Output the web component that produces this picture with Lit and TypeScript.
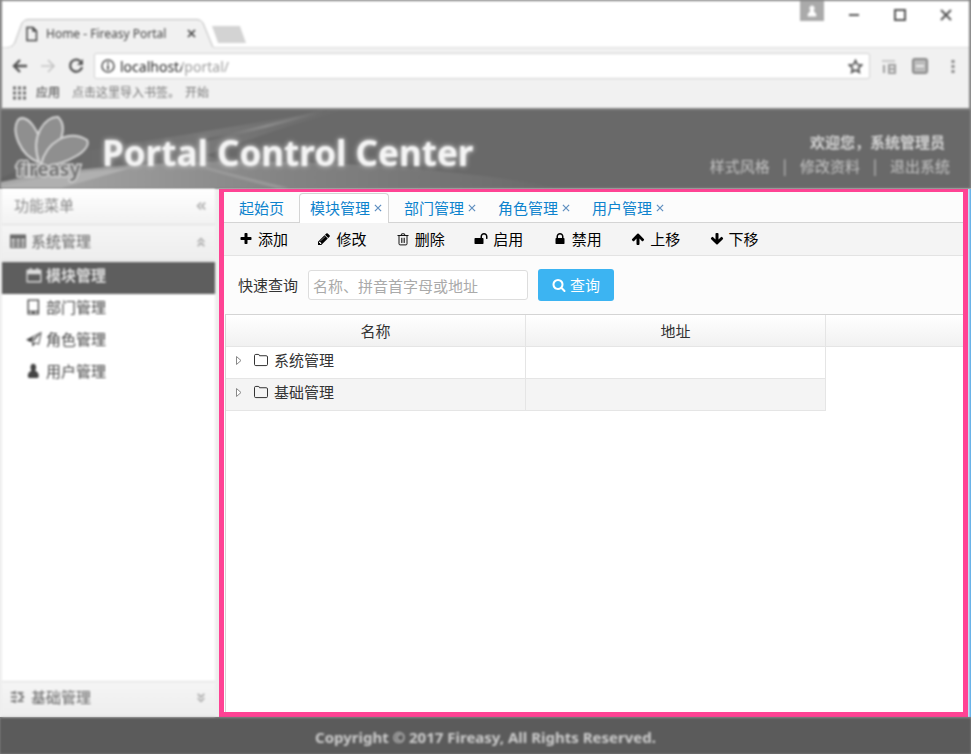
import { LitElement, html, css, svg, nothing } from "lit";
import { customElement, state } from "lit/decorators.js";
import { classMap } from "lit/directives/class-map.js";

const solid = (d: string) => svg`<path d=${d} fill="currentColor"/>`;

const glyphs: Record<string, unknown> = {
  plus: solid("M1600 736v192q0 40-28 68t-68 28h-416v416q0 40-28 68t-68 28h-192q-40 0-68-28t-28-68v-416h-416q-40 0-68-28t-28-68v-192q0-40 28-68t68-28h416v-416q0-40 28-68t68-28h192q40 0 68 28t28 68v416h416q40 0 68 28t28 68z"),
  pencil: solid("M491 1536l91-91-235-235-91 91v107h128v128h107zm523-928q0-22-22-22-10 0-17 7l-542 542q-7 7-7 17 0 22 22 22 10 0 17-7l542-542q7-7 7-17zm-54-192l416 416-832 832h-416v-416zm683 96q0 53-37 90l-166 166-416-416 166-165q36-38 90-38 53 0 91 38l235 234q37 39 37 91z"),
  trash: svg`<g fill="none" stroke="currentColor" stroke-width="118"><path d="M190 450H1602M640 440L720 230H1072L1152 440M384 460V1500Q384 1650 520 1650H1272Q1408 1650 1408 1500V460"/><path d="M704 740V1400M896 740V1400M1088 740V1400" stroke-width="90"/></g>`,
  unlock: solid("M1728 576v256q0 26-19 45t-45 19h-64q-26 0-45-19t-19-45v-256q0-106-75-181t-181-75-181 75-75 181v192h96q40 0 68 28t28 68v576q0 40-28 68t-68 28h-960q-40 0-68-28t-28-68v-576q0-40 28-68t68-28h672v-192q0-185 131.5-316.5t316.5-131.5 316.5 131.5 131.5 316.5z"),
  lock: solid("M640 768h512v-192q0-106-75-181t-181-75-181 75-75 181v192zm832 96v576q0 40-28 68t-68 28h-960q-40 0-68-28t-28-68v-576q0-40 28-68t68-28h32v-192q0-184 132-316t316-132 316 132 132 316v192h32q40 0 68 28t28 68z"),
  up: solid("M1675 971q0 51-37 90l-75 75q-38 38-91 38-54 0-90-38l-294-293v704q0 52-37.5 84.5t-90.5 32.5h-128q-53 0-90.5-32.5t-37.5-84.5v-704l-294 293q-36 38-90 38t-90-38l-75-75q-38-38-38-90 0-53 38-91l651-651q35-37 90-37 54 0 91 37l651 651q37 39 37 91z"),
  down: svg`<g transform="rotate(180 896 896)">${solid("M1675 971q0 51-37 90l-75 75q-38 38-91 38-54 0-90-38l-294-293v704q0 52-37.5 84.5t-90.5 32.5h-128q-53 0-90.5-32.5t-37.5-84.5v-704l-294 293q-36 38-90 38t-90-38l-75-75q-38-38-38-90 0-53 38-91l651-651q35-37 90-37 54 0 91 37l651 651q37 39 37 91z")}</g>`,
  search: solid("M1216 832q0-185-131.5-316.5t-316.5-131.5-316.5 131.5-131.5 316.5 131.5 316.5 316.5 131.5 316.5-131.5 131.5-316.5zm512 832q0 52-38 90t-90 38q-54 0-90-38l-343-342q-179 124-399 124-143 0-273.5-55.5t-225-150-150-225-55.5-273.5 55.5-273.5 150-225 225-150 273.5-55.5 273.5 55.5 225 150 150 225 55.5 273.5q0 220-124 399l343 343q37 37 37 90z"),
  folder: svg`<path d="M64 350Q64 180 230 180H540Q700 180 700 350H1560Q1728 350 1728 510V1450Q1728 1610 1560 1610H230Q64 1610 64 1450Z" fill="none" stroke="currentColor" stroke-width="128"/>`,
  close: svg`<path d="M200 200L1592 1592M1592 200L200 1592" fill="none" stroke="currentColor" stroke-width="270"/>`,
  table: svg`<path d="M64 256H1728V1600H64ZM64 600H1728M64 930H1728M64 1260H1728M640 500V1600M1180 500V1600" fill="none" stroke="currentColor" stroke-width="150"/><path d="M64 256H1728V540H64Z" fill="currentColor"/>`,
  calendar: svg`<path d="M128 380H1664V1650H128Z" fill="none" stroke="currentColor" stroke-width="150"/><path d="M128 320H1664V800H128ZM420 100H620V400H420ZM1170 100H1370V400H1170Z" fill="currentColor"/>`,
  tablet: svg`<path d="M240 120H1392V1670H240ZM240 1380H1392M700 1530H930" fill="none" stroke="currentColor" stroke-width="150"/>`,
  plane: svg`<path d="M1700 160L1420 1480L1010 1310L760 1640V1200L1500 360L560 1200L140 980Z" fill="none" stroke="currentColor" stroke-width="110"/><path d="M760 1740V1270L1000 1390ZM560 1200L0 980L900 560Z" fill="currentColor"/>`,
  user: solid("M816 80C1000 80 1130 240 1130 440C1130 640 1080 800 1010 880C1280 960 1430 1200 1430 1450Q1430 1670 1260 1670H372Q202 1670 202 1450C202 1200 352 960 622 880C552 800 502 640 502 440C502 240 632 80 816 80Z"),
  sliders: svg`<path d="M100 420H500M820 420H1500M100 900H800M100 1380H500M820 1380H1500M560 220V620M560 1180V1580M1100 560L1500 900L1100 1200" fill="none" stroke="currentColor" stroke-width="170"/>`,
};

const icon = (name: string) =>
  html`<svg class="icon" viewBox="0 0 1792 1792" aria-hidden="true">${glyphs[name]}</svg>`;

@customElement("browser-chrome")
class BrowserChrome extends LitElement {
  static styles = css`
    :host { display: block; background: #f1f1f1; font-family: "Noto Sans", "Noto Sans CJK SC", sans-serif; color: #555; }
    button { border: 0; background: none; padding: 0; color: inherit; font: inherit; display: flex; align-items: center; justify-content: center; }
    svg { display: block; fill: none; stroke: currentColor; }
    .strip { display: flex; height: 47px; background: #fff; border-bottom: 1px solid #dcdcdc; box-sizing: border-box; }
    .tab { position: relative; display: flex; align-items: center; gap: 8px; width: 208px; height: 29px; margin: 18px 0 0 6px; padding-left: 17px; box-sizing: border-box; color: #444; }
    .shape { position: absolute; inset: 0; }
    .tab > :not(.shape) { position: relative; }
    .name { flex: 1; white-space: nowrap; font-size: 12px; }
    .tab button { margin-right: 20px; }
    .new { width: 34px; height: 17px; margin: 25px 0 0 -4px; background: #d3d3d3; clip-path: polygon(0 0, 82% 0, 100% 100%, 18% 100%); }
    .window { display: flex; margin-left: auto; align-items: flex-start; }
    .window button { width: 46px; height: 28px; }
    .window .profile { width: 24px; height: 20px; margin-right: 7px; background: #aaa; color: #fff; }
    .bar { display: flex; align-items: center; height: 36px; padding: 0 9px 0 10px; }
    .nav { display: flex; gap: 12px; }
    .nav button { width: 16px; height: 20px; }
    .faint { color: #c4c4c4; }
    .address { display: flex; align-items: center; gap: 5px; flex: 1; height: 26px; margin: 0 11px 0 10px; padding: 0 6px; box-sizing: border-box; background: #fff; border: 1px solid #d2d2d2; border-radius: 2px; }
    .address input { flex: 1; min-width: 0; border: 0; padding: 0; height: 22px; outline: 0; font: 14px "Noto Sans", sans-serif; color: transparent; background: linear-gradient(to right, #222 62px, #999 62px); background-clip: text; -webkit-background-clip: text; }
    .extras { display: flex; align-items: center; gap: 16px; color: #888; }
    .marks { display: flex; align-items: center; height: 18px; padding: 0 11px; gap: 12px; font-size: 12px; line-height: 18px; color: #777; }
    .marks a { color: inherit; text-decoration: none; }
    .marks .apps { display: flex; align-items: center; gap: 10px; color: #333; }
    .marks a:last-child { margin-left: -7px; }
  `;
  render() {
    return html`
      <div class="strip">
        <div class="tab">
          <svg class="shape" width="208" height="29"><path d="M0 28.500Q5 28 7 23L14 4Q16 .5 20 .5H189Q193 .5 195 4L205 28.500" fill="#f1f1f1" stroke="#bbb"/><path d="M1 29H205" stroke="#f1f1f1" stroke-width="2"/></svg>
          <svg width="13" height="16"><path d="M2 1.500H8L11.500 5V14.500H2ZM8 1.500V5H11.500" stroke-width="1.500"/></svg>
          <span class="name">Home - Fireasy Portal</span>
          <button aria-label="Close tab"><svg width="9" height="9"><path d="M1 1L8 8M8 1L1 8" stroke-width="1.700"/></svg></button>
        </div>
        <div class="new"></div>
        <div class="window">
          <button class="profile" aria-label="Profile"><svg width="10" height="12"><path d="M1 11C1 8 3 7 4 6C2 3 3 1 5 1S8 3 6 6C7 7 9 8 9 11Z" fill="currentColor"/></svg></button>
          <button aria-label="Minimize"><svg width="12" height="12"><path d="M1 6H11" stroke-width="2"/></svg></button>
          <button aria-label="Maximize"><svg width="12" height="12"><path d="M1 1H11V11H1Z" stroke-width="2"/></svg></button>
          <button aria-label="Close"><svg width="12" height="12"><path d="M1 1L11 11M11 1L1 11" stroke-width="2"/></svg></button>
        </div>
      </div>
      <div class="bar">
        <div class="nav">
          <button aria-label="Back"><svg width="16" height="16"><path d="M15 8H2M8 2L2 8L8 14" stroke-width="2.400"/></svg></button>
          <button class="faint" aria-label="Forward"><svg width="16" height="16"><path d="M1 8H14M8 2L14 8L8 14" stroke-width="1.600"/></svg></button>
          <button aria-label="Reload"><svg width="16" height="16"><path d="M12.500 3.500A6 6 0 1 0 14 9" stroke-width="2.400"/><path d="M15 1V7H9Z" fill="currentColor" stroke="none"/></svg></button>
        </div>
        <div class="address">
          <svg width="14" height="14"><circle cx="7" cy="7" r="6" stroke-width="1.600"/><path d="M7 6V11M7 3V5" stroke-width="1.800"/></svg>
          <input aria-label="Address" value="localhost/portal/" />
          <svg width="15" height="15"><path d="M7.500 1.500L9.300 5.500L13.700 6L10.400 9L11.300 13.300L7.500 11L3.700 13.300L4.600 9L1.300 6L5.700 5.500Z" stroke-width="1.700"/></svg>
        </div>
        <div class="extras">
          <svg width="15" height="15"><path d="M1 2H14" stroke-width="1.500" opacity=".5"/><path d="M3 6V14M8 6H14V14H8ZM8 10H14" stroke-width="2" opacity=".8"/></svg>
          <svg width="16" height="16"><rect x="1" y="1" width="14" height="14" rx="2" fill="#bbb" stroke-width="2"/><path d="M4 8H12" stroke="#eee" stroke-width="2"/></svg>
          <svg width="16" height="16"><path d="M9 2V5M9 7V10M9 12V15" stroke-width="3"/></svg>
        </div>
      </div>
      <div class="marks">
        <a class="apps" href="#"><svg width="13" height="14"><path d="M0 2H13M0 7H13M0 12H13" stroke-width="3" stroke-dasharray="3 2" opacity=".7"/></svg>应用</a>
        <a href="#">点击这里导入书签。</a><a href="#">开始</a>
      </div>`;
  }
}

@customElement("portal-header")
class PortalHeader extends LitElement {
  static styles = css`
    :host { position: relative; display: flex; align-items: center; background: #696969; color: #d4d4d4; font-family: "Noto Sans CJK SC", sans-serif; overflow: hidden; }
    .swoosh { position: absolute; inset: 0; width: 760px; height: 100%; }
    .brand { position: relative; display: flex; align-items: center; gap: 10px; padding-left: 11px; }
    h1 { margin: 0; padding-top: 8px; font: bold 35px/48px "Noto Sans", sans-serif; color: #f4f4f4; text-shadow: 0 0 5px #ddd; white-space: nowrap; }
    .logo { display: block; width: 80px; height: 76px; }
    .account { position: relative; margin-left: auto; padding: 9px 20px 0 0; font-size: 15px; line-height: 24px; text-align: right; }
    .hello { padding-right: 5px; font-weight: bold; }
    .links { display: flex; gap: 13px; color: #c4c4c4; }
    a { color: inherit; text-decoration: none; }
  `;
  render() {
    return html`
      <svg class="swoosh" viewBox="0 0 760 78" preserveAspectRatio="none">
        <defs>
          <linearGradient id="a"><stop offset="0" stop-color="#aaa"/><stop offset=".5" stop-color="#848484"/><stop offset="1" stop-color="#696969"/></linearGradient>
          <linearGradient id="b"><stop offset="0" stop-color="#626262"/><stop offset=".6" stop-color="#787878"/><stop offset="1" stop-color="#696969"/></linearGradient>
          <linearGradient id="c"><stop offset="0" stop-color="#696969"/><stop offset=".5" stop-color="#8a8a8a"/><stop offset="1" stop-color="#696969"/></linearGradient>
        </defs>
        <path d="M0 68C60 40 130 34 200 22L330 0H345C280 16 240 34 205 45L300 78H0Z" fill="url(#b)"/>
        <path d="M205 30Q270 16 325 0" fill="none" stroke="url(#c)" stroke-width="3"/>
        <path d="M0 72C150 40 400 48 560 78H0Z" fill="url(#a)"/>
        <path d="M0 76Q60 62 130 58L60 78H0Z" fill="#b0b0b0"/>
        <path d="M205 58Q240 68 290 80" fill="none" stroke="#999" stroke-width="3"/>
      </svg>
      <div class="brand">
        <svg class="logo" viewBox="0 0 80 76" role="img" aria-label="fireasy">
          <g fill="#8f8f8f" stroke="#d6d6d6" stroke-width="2">
            <path d="M26 51C8 44 -1 20 6 9C14 1 30 20 30 44Z"/>
            <path d="M27 51C18 25 33 5 46 6C58 17 45 43 30 54Z"/>
            <path d="M29 54C34 31 56 18 75 29C80 38 58 53 29 56Z"/>
          </g>
          <text x="4" y="65" font-family="Noto Sans" font-weight="bold" font-size="19" fill="#777" stroke="#d0d0d0" stroke-width="3" paint-order="stroke">fireasy</text>
        </svg>
        <h1>Portal Control Center</h1>
      </div>
      <div class="account">
        <div class="hello">欢迎您，系统管理员</div>
        <nav class="links"><a href="#">样式风格</a><span>|</span><a href="#">修改资料</a><span>|</span><a href="#">退出系统</a></nav>
      </div>`;
  }
}

@customElement("side-menu")
class SideMenu extends LitElement {
  static styles = css`
    :host { display: flex; flex-direction: column; background: #fff; color: #666; font: 15px/24px "Noto Sans CJK SC", sans-serif; }
    button { display: flex; align-items: center; gap: 5px; width: 100%; height: 36px; padding: 0 9px 4px 8px; border: 0; border-bottom: 1px solid #ddd; background: linear-gradient(#f5f5f5, #eee); color: inherit; font: inherit; box-sizing: border-box; }
    .title { padding-left: 12px; background: linear-gradient(#fff, #f2f2f2); color: #888; }
    .chev { width: 10px; height: 10px; margin: 2px 0 0 auto; fill: none; stroke: #aaa; stroke-width: 2; }
    .icon { width: 16px; height: 16px; }
    ul { flex: 1; list-style: none; margin: 0; padding: 1px 0 0; }
    a { display: flex; align-items: center; gap: 4px; height: 32px; padding: 0 24px 6px; box-sizing: border-box; color: #444; text-decoration: none; }
    .on { background: #5e5e5e; color: #ddd; font-weight: bold; }
    .last { border-top: 1px solid #ddd; }
  `;
  private items = [["calendar", "模块管理"], ["tablet", "部门管理"], ["plane", "角色管理"], ["user", "用户管理"]];
  render() {
    return html`
      <button class="title">功能菜单<svg class="chev" viewBox="0 0 12 12"><path d="M6 2L2 6L6 10M11 2L7 6L11 10"/></svg></button>
      <button>${icon("table")}系统管理<svg class="chev" viewBox="0 0 12 12"><path d="M2 6L6 2L10 6M2 11L6 7L10 11"/></svg></button>
      <ul>
        ${this.items.map(([name, label], i) => html`<li><a href="#" class=${classMap({ on: i === 0 })}>${icon(name)}${label}</a></li>`)}
      </ul>
      <button class="last">${icon("sliders")}基础管理<svg class="chev" viewBox="0 0 12 12"><path d="M2 1L6 5L10 1M2 6L6 10L10 6"/></svg></button>`;
  }
}

@customElement("module-panel")
class ModulePanel extends LitElement {
  @state() private active = 1;
  static styles = css`
    :host { display: flex; flex-direction: column; background: #fff; color: #333; font: 15px/22px "Noto Sans CJK SC", sans-serif; }
    button { font: inherit; border: 0; background: none; padding: 0; color: inherit; }
    .icon { display: block; width: 14px; height: 14px; flex: none; }
    .tabs { display: flex; gap: 4px; height: 29px; padding: 1px 4px 0; background: #fcfcfc; border-bottom: 1px solid #d4d4d4; }
    .tab { display: flex; align-items: center; gap: 4px; height: 29px; padding: 0 10px; border: 1px solid transparent; border-bottom: 0; border-radius: 4px 4px 0 0; box-sizing: border-box; color: #0e83cd; }
    .tab.closable { padding-right: 6px; }
    .tab.active { height: 30px; background: #fff; border-color: #d4d4d4; padding-bottom: 1px; }
    .tab .close .icon { width: 8px; height: 8px; }
    .close { color: #5f8fc0; }
    .tools { background: #f4f4f4; border-bottom: 1px solid #e3e3e3; padding-left: 13px; }
    .row { display: grid; grid-template-columns: repeat(7, 1fr); width: 549px; height: 32px; }
    .row button { display: flex; align-items: center; gap: 5px; padding-left: 2px; color: #000; white-space: nowrap; }
    form { display: flex; align-items: center; gap: 10px; height: 58px; padding: 0 14px; background: #fcfcfc; box-sizing: border-box; }
    input { width: 220px; height: 30px; padding: 0 4px; border: 1px solid #ddd; border-radius: 3px; box-sizing: border-box; background: #fff; font: inherit; color: #333; outline: 0; }
    input::placeholder { color: #aaa; }
    .query { display: flex; align-items: center; justify-content: center; gap: 4px; width: 76px; height: 32px; border-radius: 3px; background: #3cb4f2; color: #fff; }
    .grid { flex: 1; margin-left: 1px; border: 0 solid #d4d4d4; border-width: 1px 0 0 1px; }
    table { width: 100%; table-layout: fixed; border-collapse: separate; border-spacing: 0; }
    .col { width: 300px; }
    th, td { height: 32px; padding: 0; box-sizing: border-box; border: 0 solid #e5e5e5; border-width: 0 1px 1px 0; }
    th { background: linear-gradient(#fff, #f1f1f1); font-weight: normal; }
    th:last-child { border-right: 0; }
    td:last-child { border: 0; }
    .alt td:not(:last-child) { background: #f4f4f4; }
    .cell { display: flex; align-items: center; padding: 0 0 6px 10px; }
    .cell .folder { display: flex; margin: 0 6px 0 11px; }
    .twist { width: 7px; height: 9px; margin-top: 2px; display: block; }
  `;
  private tabs = ["起始页", "模块管理", "部门管理", "角色管理", "用户管理"];
  private tools = [["plus", "添加"], ["pencil", "修改"], ["trash", "删除"], ["unlock", "启用"], ["lock", "禁用"], ["up", "上移"], ["down", "下移"]];
  render() {
    return html`
      <div class="tabs" role="tablist">
        ${this.tabs.map((t, i) => html`
          <div class=${classMap({ tab: true, closable: i > 0, active: i === this.active })}>
            <button role="tab" @click=${() => (this.active = i)}>${t}</button>
            ${i > 0 ? html`<button class="close" aria-label="关闭">${icon("close")}</button>` : nothing}
          </div>`)}
      </div>
      <div class="tools"><div class="row">
        ${this.tools.map(([n, t]) => html`<button>${icon(n)}${t}</button>`)}
      </div></div>
      <form @submit=${(e: Event) => e.preventDefault()}>
        <label for="q">快速查询</label>
        <input id="q" placeholder="名称、拼音首字母或地址" />
        <button class="query">${icon("search")}查询</button>
      </form>
      <div class="grid">
        <table>
          <colgroup><col class="col" /><col class="col" /><col /></colgroup>
          <thead><tr><th>名称</th><th>地址</th><th></th></tr></thead>
          <tbody>
            ${["系统管理", "基础管理"].map((t, i) => html`
              <tr class=${classMap({ alt: i % 2 === 1 })}>
                <td><div class="cell">
                  <svg class="twist" viewBox="0 0 7 9"><path d="M.5 .5V8.500L5 4.500Z" fill="#fff" stroke="#888"/></svg>
                  <span class="folder">${icon("folder")}</span>${t}
                </div></td><td></td><td></td>
              </tr>`)}
          </tbody>
        </table>
      </div>`;
  }
}

@customElement("app-root")
class AppRoot extends LitElement {
  static styles = css`
    :host { display: flex; flex-direction: column; min-height: 100vh; background: #858585; box-sizing: border-box; }
    .soft { filter: blur(1.3px) grayscale(1); }
    browser-chrome { height: 107px; margin: 1px 2px 0 2px; box-sizing: border-box; }
    portal-header { height: 78px; margin: 2px 1px 0; }
    main { display: flex; flex: 1; padding-top: 1px; background: linear-gradient(#999, #eee 2px); }
    side-menu { width: 213px; margin-left: 2px; }
    module-panel { flex: 1; margin: 0 0 0 4px; border: 5px solid #ff4394; border-top-width: 3px; }
    .edge { width: 3px; background: linear-gradient(to right, #d5e9f6, #55a8e6); }
    footer { height: 36px; margin-top: 1px; background: #5b5b5b; color: #ccc; text-align: center; font: bold 15px/38px "Noto Sans", sans-serif; box-sizing: border-box; }
  `;
  render() {
    return html`
      <browser-chrome class="soft"></browser-chrome>
      <portal-header class="soft"></portal-header>
      <main>
        <side-menu class="soft"></side-menu>
        <module-panel></module-panel>
        <div class="edge"></div>
      </main>
      <footer class="soft">Copyright © 2017 Fireasy, All Rights Reserved.</footer>`;
  }
}
